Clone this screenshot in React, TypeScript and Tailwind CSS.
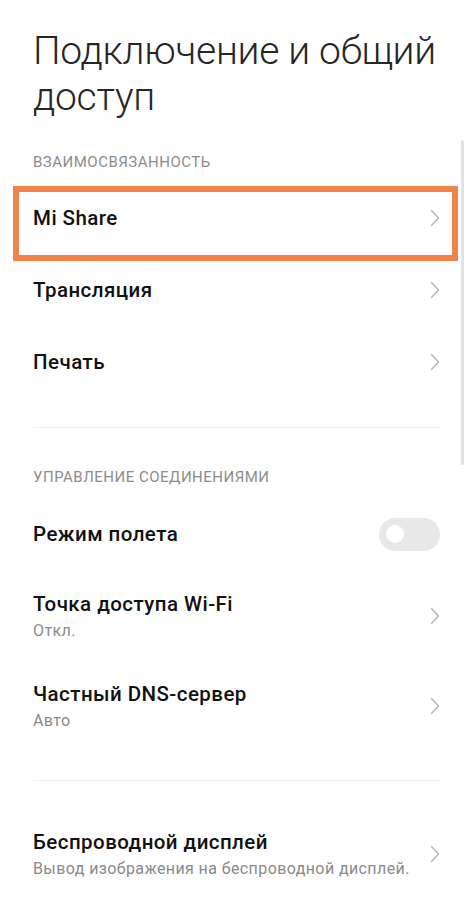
import React from "react";

const Chevron = () => (
  <svg width="10" height="18" viewBox="0 0 10 18" fill="none" className="shrink-0">
    <path d="M1.5 1.5 L8.5 9 L1.5 16.5" stroke="#b5b5b5" strokeWidth="1.4" strokeLinecap="round" strokeLinejoin="round" />
  </svg>
);

const Row = ({ title, sub, h, extra }: { title: string; sub?: string; h: string; extra?: React.ReactNode }) => (
  <div className={`flex items-center justify-between pl-[33px] pr-[34px] ${h}`}>
    <div className="flex flex-col">
      <div className="text-[20.5px] font-medium text-[#111] leading-[24px] tracking-[0.45px]">{title}</div>
      {sub && <div className="text-[16px] text-[#8a8a8a] leading-[20px] mt-[5px] tracking-[0.4px]">{sub}</div>}
    </div>
    {extra ?? <Chevron />}
  </div>
);

export default function App() {
  return (
    <div className="relative w-[474px] h-[910px] bg-white overflow-hidden" style={{ fontFamily: "Roboto, 'Noto Sans', sans-serif" }}>
      <div className="pl-[33px] pt-[28px] text-[39px] font-light leading-[46px] text-[#262626] tracking-[-0.3px]">
        Подключение и общий<br />доступ
      </div>
      <div className="pl-[33px] mt-[32px] h-[20px] text-[15px] leading-[20px] text-[#8c8c8c] tracking-[0.5px]">ВЗАИМОСВЯЗАННОСТЬ</div>
      <div className="mt-[10px]">
        <Row title="Mi Share" h="h-[72px]" />
        <Row title="Трансляция" h="h-[72px]" />
        <Row title="Печать" h="h-[72px]" />
      </div>
      <div className="mx-[33px] mt-[29px] h-px bg-[#ececec]" />
      <div className="pl-[33px] mt-[39px] h-[20px] text-[15px] leading-[20px] text-[#8c8c8c] tracking-[0.5px]">УПРАВЛЕНИЕ СОЕДИНЕНИЯМИ</div>
      <Row
        title="Режим полета"
        h="h-[72px] mt-[11px]"
        extra={
          <div className="w-[61px] h-[33px] rounded-full bg-[#e8e8e8] flex items-center pl-[7px]">
            <div className="w-[18px] h-[18px] rounded-full bg-white" />
          </div>
        }
      />
      <Row title="Точка доступа Wi-Fi" sub="Откл." h="h-[90px] mt-[1px]" />
      <Row title="Частный DNS-сервер" sub="Авто" h="h-[90px]" />
      <div className="mx-[33px] mt-[29px] h-px bg-[#ececec]" />
      <Row title="Беспроводной дисплей" sub="Вывод изображения на беспроводной дисплей." h="h-[90px] mt-[28px]" />

      <div className="absolute left-[13px] top-[186px] w-[445px] h-[75px] border-[6px] border-[#f08348]" />
      <div className="absolute left-[461px] top-[140px] w-[3px] h-[325px] rounded-full bg-[#e2e2e2]" />
    </div>
  );
}
